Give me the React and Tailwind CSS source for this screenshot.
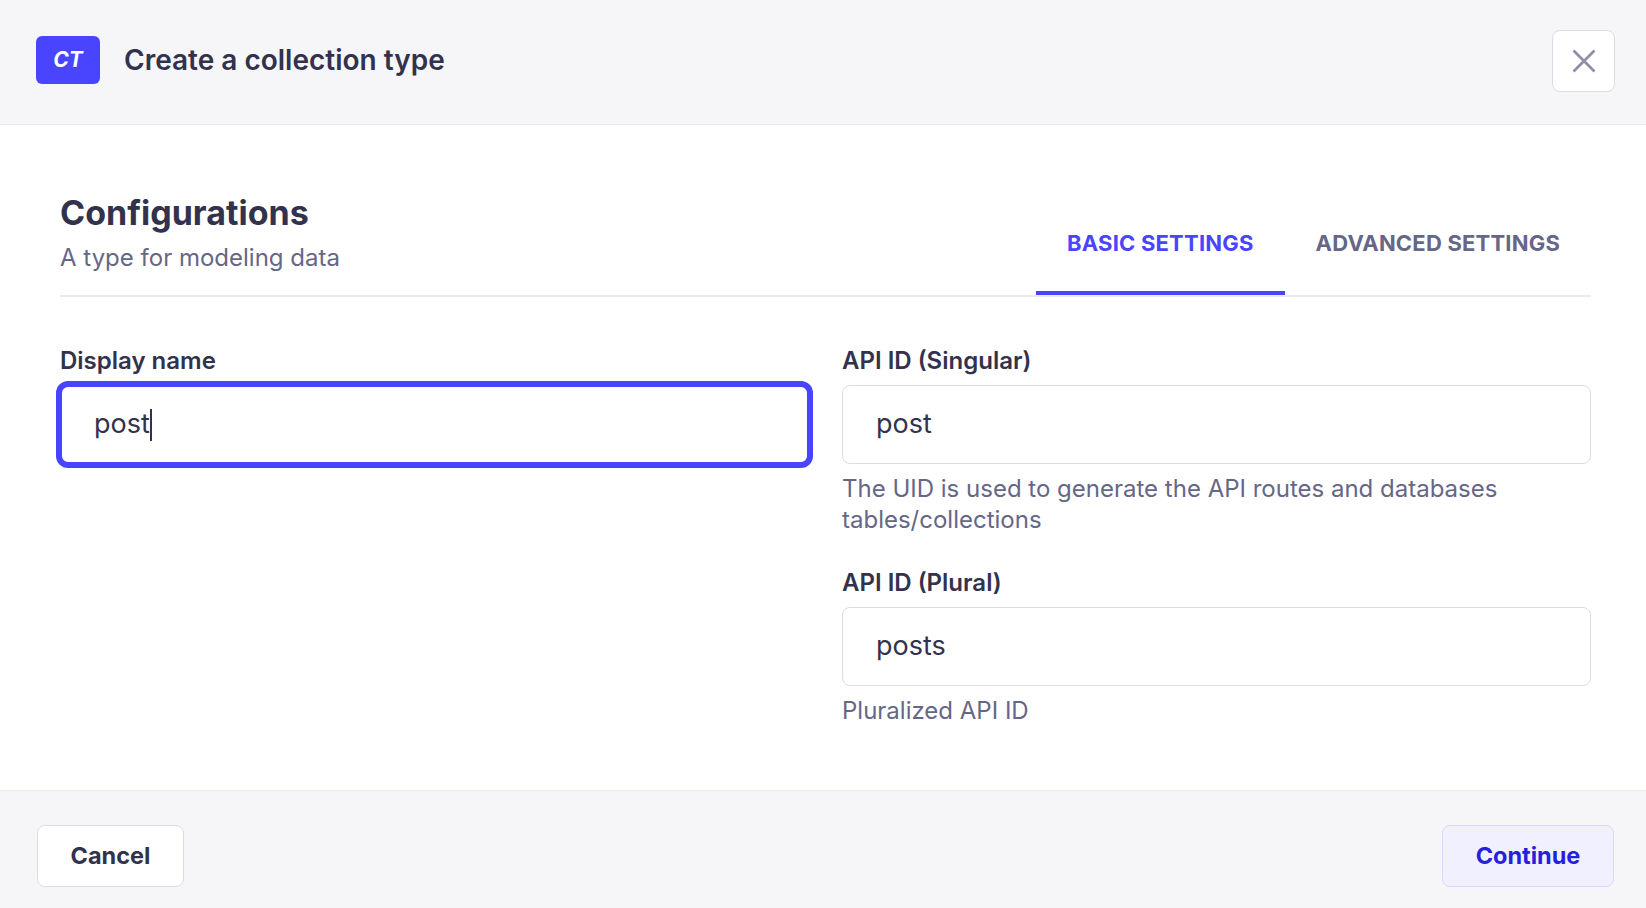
import React from 'react';

const Field = ({ label, value, focused, hint }) => {
    return (
        <div className="flex flex-col">
            <label className="text-[24px] leading-[28px] font-semibold text-[#32324d]">{label}</label>
            <div
                className={
                    focused
                        ? "mt-[10px] h-[79px] flex items-center px-[32px] rounded-[8px] bg-white border-2 border-[#4945ff] shadow-[0_0_0_4px_#4945ff]"
                        : "mt-[10px] h-[79px] flex items-center px-[33px] rounded-[8px] bg-white border border-[#dcdce4]"
                }
            >
                <span className="text-[27px] text-[#32324d]">{value}</span>
                {focused && <span className="w-[2px] h-[32px] bg-[#32324d]" />}
            </div>
            {hint && <p className="mt-[9px] text-[24px] leading-[31px] text-[#666687]">{hint}</p>}
        </div>
    );
};

export default function App() {
    return (
        <div className="w-[1646px] h-[908px] flex flex-col bg-white font-['Inter',sans-serif]">
            {/* Header */}
            <div className="h-[125px] shrink-0 flex items-center justify-between bg-[#f6f6f9] border-b border-[#eaeaef] pl-[36px] pr-[31px] pb-[5px]">
                <div className="flex items-center">
                    <div className="w-[64px] h-[48px] rounded-[6px] bg-[#4945ff] flex items-center justify-center">
                        <span className="text-white italic font-bold text-[21px]">CT</span>
                    </div>
                    <h1 className="ml-[24px] text-[28px] font-semibold text-[#32324d]">Create a collection type</h1>
                </div>
                <button className="w-[63px] h-[62px] mt-[2px] rounded-[8px] bg-white border border-[#dcdce4] flex items-center justify-center">
                    <svg width="24" height="24" viewBox="0 0 24 24" fill="none" stroke="#8e8ea9" strokeWidth="2.6">
                        <path d="M1.5 1.5 L22.5 22.5 M22.5 1.5 L1.5 22.5" />
                    </svg>
                </button>
            </div>

            {/* Body */}
            <div className="flex-1 pl-[60px] pr-[55px] pt-[67px]">
                <div className="flex items-end justify-between border-b-2 border-[#eaeaef]">
                    <div className="pb-[23px]">
                        <h2 className="text-[34px] leading-[41px] font-bold text-[#32324d]">Configurations</h2>
                        <p className="mt-[11px] text-[24px] leading-[28px] text-[#666687]">A type for modeling data</p>
                    </div>
                    <div className="flex">
                        <button className="px-[31px] pb-[35px] border-b-4 border-[#4945ff] text-[22px] leading-[26px] font-bold uppercase tracking-[0.2px] text-[#4945ff]">
                            Basic settings
                        </button>
                        <button className="px-[31px] pb-[35px] border-b-4 border-transparent text-[22px] leading-[26px] font-bold uppercase tracking-[0.2px] text-[#666687]">
                            Advanced settings
                        </button>
                    </div>
                </div>

                <div className="grid grid-cols-2 gap-x-[33px] pt-[50px]">
                    <div>
                        <Field label="Display name" value="post" focused />
                    </div>
                    <div className="flex flex-col gap-[34px]">
                        <Field
                            label="API ID (Singular)"
                            value="post"
                            hint="The UID is used to generate the API routes and databases tables/collections"
                        />
                        <Field label="API ID (Plural)" value="posts" hint="Pluralized API ID" />
                    </div>
                </div>
            </div>

            {/* Footer */}
            <div className="h-[118px] shrink-0 flex items-start justify-between bg-[#f6f6f9] border-t border-[#eaeaef] pl-[37px] pr-[32px] pt-[34px]">
                <button className="w-[147px] h-[62px] rounded-[8px] bg-white border border-[#dcdce4] text-[23.5px] font-bold text-[#32324d]">
                    Cancel
                </button>
                <button className="w-[172px] h-[62px] rounded-[8px] bg-[#f0f0ff] border border-[#d9d8ff] text-[23.5px] font-bold text-[#271fe0]">
                    Continue
                </button>
            </div>
        </div>
    );
}
